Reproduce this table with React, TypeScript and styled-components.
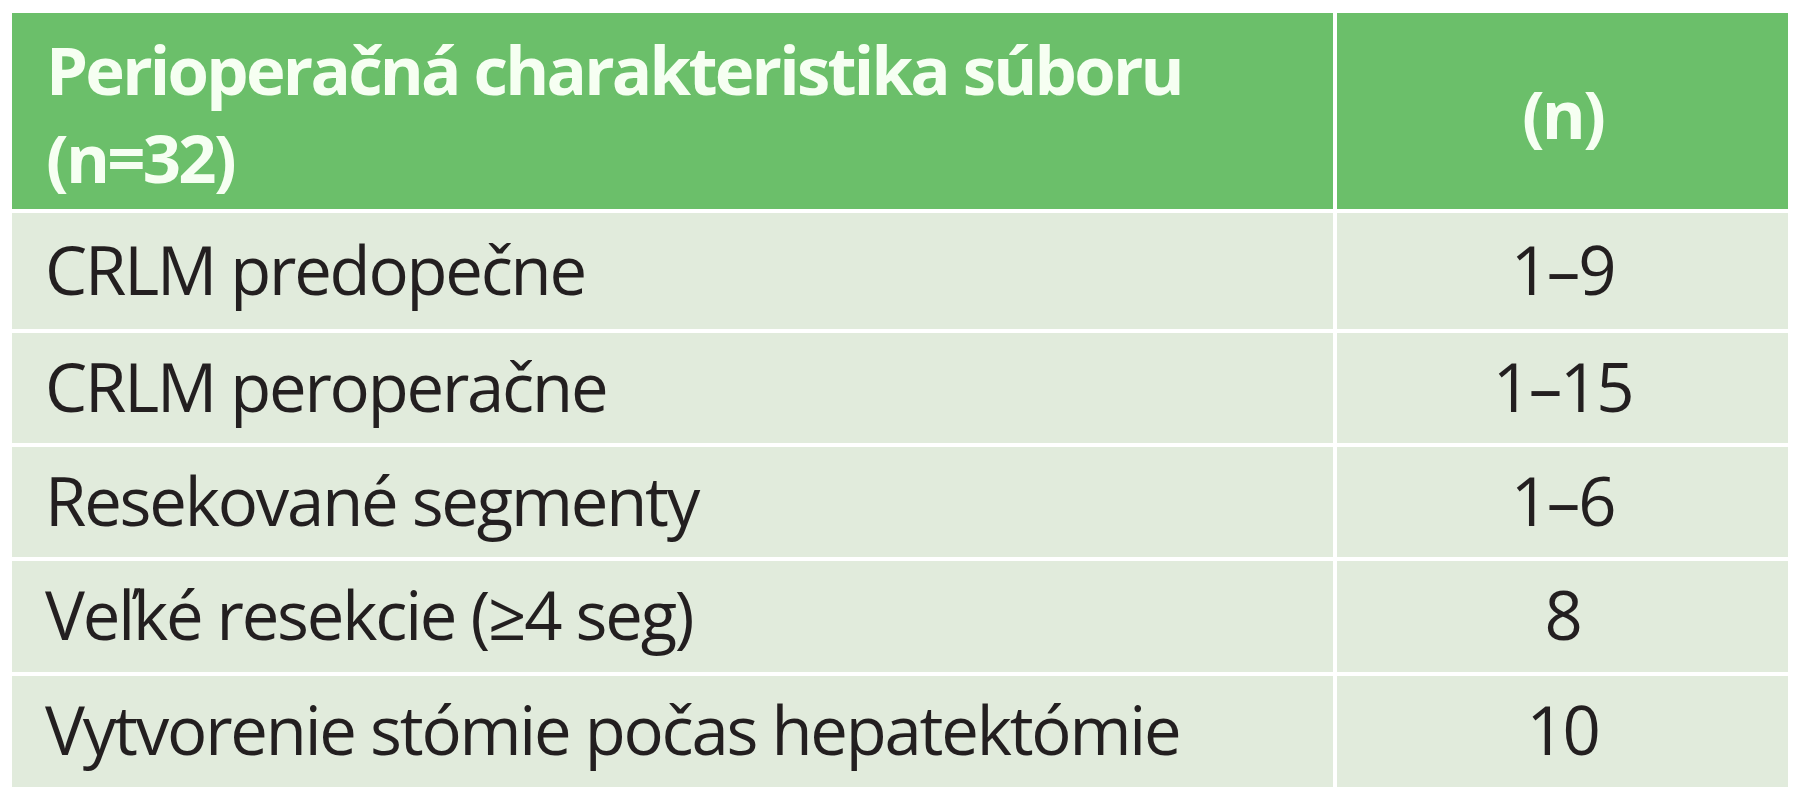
import { createGlobalStyle, styled } from 'styled-components';

const GlobalStyle = createGlobalStyle`
  html, body {
    margin: 0;
    padding: 0;
    background: #ffffff;
  }
`;

const rows = [
  { label: 'CRLM predopečne', value: '1–9' },
  { label: 'CRLM peroperačne', value: '1–15' },
  { label: 'Resekované segmenty', value: '1–6' },
  { label: 'Veľké resekcie (≥4 seg)', value: '8' },
  { label: 'Vytvorenie stómie počas hepatektómie', value: '10' },
];

export default function App() {
  return (
    <>
      <GlobalStyle />
      <Page>
        <Table>
          <HeadCell>
            Perioperačná charakteristika súboru
            <br />
            (n=32)
          </HeadCell>
          <HeadCell $center>(n)</HeadCell>
          {rows.map((row) => (
            <Row key={row.label}>
              <Cell>{row.label}</Cell>
              <Cell $center>{row.value}</Cell>
            </Row>
          ))}
        </Table>
      </Page>
    </>
  );
}

const Page = styled.div`
  padding: 13px 0 0 12px;
`;

const Table = styled.div`
  display: grid;
  grid-template-columns: 1321px 451px;
  grid-template-rows: 196px 116px 110px 110px 111px 111px;
  gap: 4px;

  width: max-content;

  font-family: 'Open Sans', 'Noto Sans', sans-serif;
  font-size: 67px;
`;

// 행 단위로 묶기만 하고 셀은 그리드에 그대로 배치
const Row = styled.div`
  display: contents;
`;

const HeadCell = styled.div<{ $center?: boolean }>`
  display: flex;
  align-items: center;
  justify-content: ${(p) => (p.$center ? 'center' : 'flex-start')};

  padding-left: ${(p) => (p.$center ? '0' : '34px')};
  padding-top: 3px;

  background-color: #6bbf6a;
  color: #f6fff2;

  font-weight: 700;
  letter-spacing: -2.75px;
  line-height: 88px;
`;

const Cell = styled.div<{ $center?: boolean }>`
  display: flex;
  align-items: center;
  justify-content: ${(p) => (p.$center ? 'center' : 'flex-start')};

  padding-left: ${(p) => (p.$center ? '0' : '33px')};
  padding-bottom: 4px;

  background-color: #e1ebdc;
  color: #231f20;

  letter-spacing: -2.2px;
  line-height: 1;
`;
